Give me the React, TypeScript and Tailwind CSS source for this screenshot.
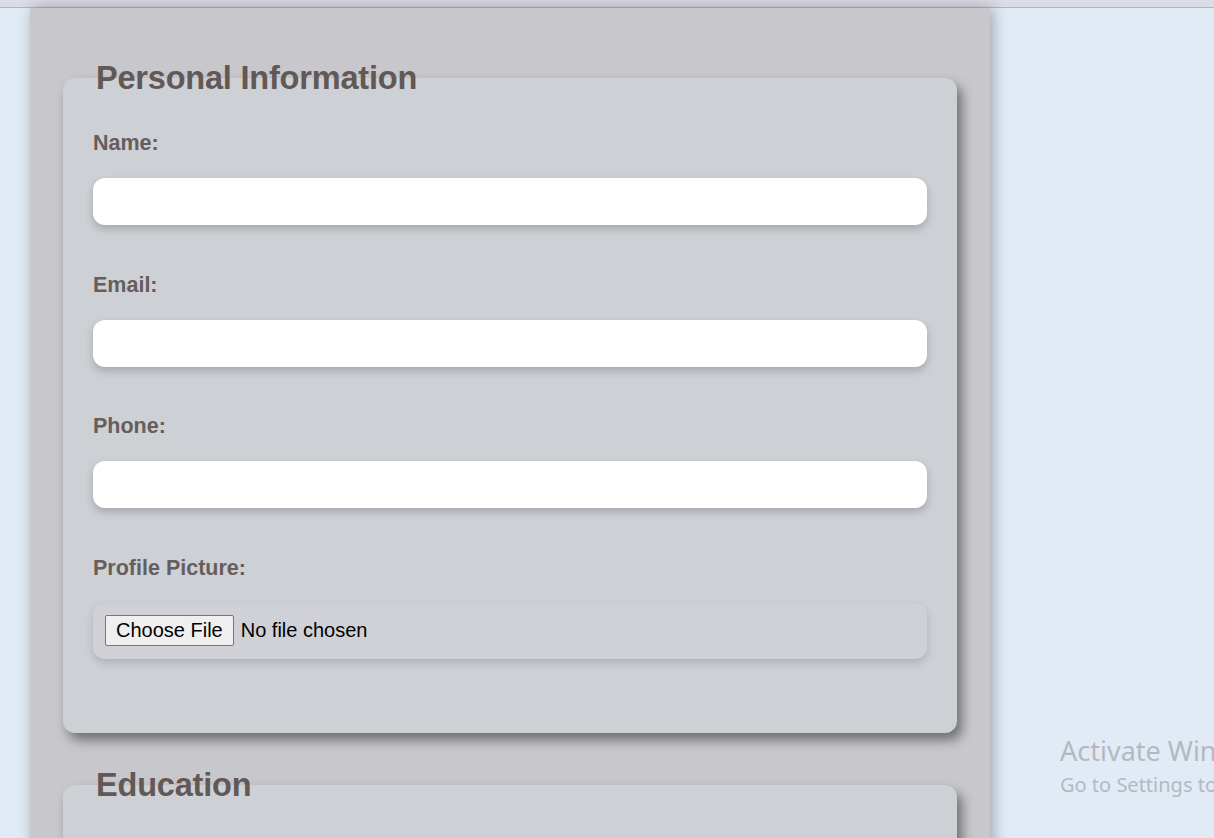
import React from 'react';

const fieldLabel = "block text-[21.5px] leading-[24px] font-bold text-[#675d5b] mb-[23px]";
const textInput = "block w-full h-[47px] rounded-xl bg-white px-4 text-[18px] outline-none shadow-[0_4px_8px_rgba(0,0,0,0.2)] mb-[47.5px]";

const Section: React.FC<{ title: string; children?: React.ReactNode; className?: string }> = ({ title, children, className }) => (
    <section className={className}>
        <h2 className="relative z-10 ml-[30px] px-[3px] text-[32.5px] leading-[37px] font-bold tracking-[-0.2px] text-[#625856] w-fit">{title}</h2>
        <div className="-mt-[19px] min-h-[200px] rounded-xl bg-[#cdd0d5] px-[30px] pt-[53px] pb-[74.5px] shadow-[5px_7px_12px_rgba(0,0,0,0.45)]">
            {children}
        </div>
    </section>
);

const App: React.FC = () => {
    return (
        <div className="h-screen overflow-hidden bg-[#e1ebf5] font-['Liberation_Sans',Arial,sans-serif] relative">
            <div className="h-[8px] bg-[#dcdce6] border-b border-[#b4b4be]" />
            <div className="ml-[30px] w-[960px] min-h-[900px] bg-[#c8c7cb] px-[33px] pt-[52px] shadow-[3px_0_14px_rgba(0,0,0,0.3)]">
                <Section title="Personal Information" className="mb-[34px]">
                    <label className={fieldLabel}>Name:</label>
                    <input type="text" className={textInput} />
                    <label className={fieldLabel}>Email:</label>
                    <input type="email" className={textInput} />
                    <label className={fieldLabel}>Phone:</label>
                    <input type="tel" className={textInput} />
                    <label className={fieldLabel}>Profile Picture:</label>
                    <input
                        type="file"
                        className="block w-full h-[56px] rounded-xl bg-[#cfd1d6] p-[12px] text-[20px] leading-[23px] text-black shadow-[0_4px_8px_rgba(0,0,0,0.15)] file:mr-[7px] file:rounded-[2px] file:border file:border-[#767676] file:bg-[#efefef] file:px-[10px] file:py-[3px] file:text-black"
                    />
                </Section>
                <Section title="Education" />
            </div>
            <div className="absolute left-[1060px] top-[733px] whitespace-nowrap font-['Noto_Sans',sans-serif] text-[#b4b9bf]">
                <div className="text-[27px] leading-[36px]">Activate Windows</div>
                <div className="mt-[3px] text-[20px] leading-[26px]">Go to Settings to activate Windows.</div>
            </div>
        </div>
    );
};

export default App;
